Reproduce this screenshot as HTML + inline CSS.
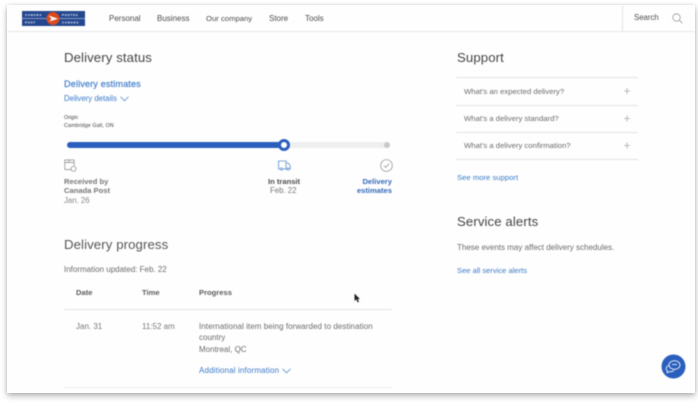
<!DOCTYPE html>
<html lang="en">
<head>
<meta charset="utf-8">
<title>Delivery status</title>
<style>
html,body{margin:0;padding:0;background:#fff;width:698px;height:408px;overflow:hidden}
body{font-family:"Liberation Sans",sans-serif;position:relative}
#card{position:absolute;left:7px;top:5px;width:688px;height:388px;background:#fefefe;box-shadow:0 3px 6px rgba(0,0,0,.28),0 0 3px rgba(0,0,0,.12)}
#page{position:absolute;left:0;top:0;width:698px;height:408px;filter:blur(.4px)}
.t{position:absolute;white-space:nowrap;line-height:1;color:#555}
.h{color:#444;font-size:13.2px;letter-spacing:.1px}
.nav{font-size:8px;color:#4c4c4c;top:14.500px}
.b{color:#3b7bc9}
.s{font-size:7.8px}
.l{position:absolute;height:1px;background:#e2e2e2}
svg{position:absolute;overflow:visible}
</style>
</head>
<body>
<div id="card"></div>
<div id="page">
<div class="l" style="left:7px;top:31px;width:688px;background:#e8e8e8"></div>
<div class="l" style="left:622px;top:6px;width:1px;height:25px;background:#e2e2e2"></div>

<svg style="left:22px;top:11px" width="63" height="15" viewBox="0 0 63 15">
<rect width="63" height="15" fill="#24478f"/>
<rect x="0" y="7.2" width="63" height=".6" fill="#c8d2e6"/>
<circle cx="31" cy="7.5" r="6.5" fill="#dd4b1c"/>
<path d="M26.5 4.5 L36 7.8 L27.5 10.5 L29.5 7.8Z" fill="#fff"/>
<text x="3" y="5.2" font-size="3" letter-spacing=".7" font-weight="700" fill="#fff" font-family="Liberation Sans">CANADA</text>
<text x="3" y="12.4" font-size="3" letter-spacing=".7" font-weight="700" fill="#fff" font-family="Liberation Sans">POST</text>
<text x="40" y="5.2" font-size="3" letter-spacing=".7" font-weight="700" fill="#fff" font-family="Liberation Sans">POSTES</text>
<text x="40" y="12.4" font-size="3" letter-spacing=".7" font-weight="700" fill="#fff" font-family="Liberation Sans">CANADA</text>
</svg>

<div class="t nav" style="left:109px">Personal</div>
<div class="t nav" style="left:157px">Business</div>
<div class="t nav" style="left:206px;font-size:7.7px">Our company</div>
<div class="t nav" style="left:269px">Store</div>
<div class="t nav" style="left:305px">Tools</div>
<div class="t nav" style="left:634px;top:13.500px;font-size:7.8px">Search</div>
<svg style="left:672px;top:13px" width="11" height="11" fill="none" stroke="#999" stroke-width=".8"><circle cx="4.5" cy="4.5" r="3.7"/><path d="M7.2 7.2L10.4 10.2"/></svg>

<div class="t h" style="left:64px;top:51px">Delivery status</div>
<div class="t b" style="left:64px;top:80px;font-size:9.2px;letter-spacing:.1px;font-weight:400;-webkit-text-stroke:.15px #3b7bc9">Delivery estimates</div>
<div class="t b s" style="left:64px;top:95px">Delivery details</div>
<svg style="left:120px;top:96px" width="9" height="6" fill="none" stroke="#5c8fd0" stroke-width=".8"><path d="M.5 .8L4.5 4.8L8.5 .8"/></svg>
<div class="t" style="left:64px;top:116px;font-size:5.3px;color:#444">Origin</div>
<div class="t" style="left:64px;top:123.500px;font-size:5.3px;color:#444;letter-spacing:.1px">Cambridge Galt, ON</div>

<div style="position:absolute;left:280px;top:142px;width:110px;height:6px;border-radius:3px;background:#efefef"></div>
<div style="position:absolute;left:67px;top:142px;width:217px;height:6px;border-radius:3px;background:#2a5fbd"></div>
<div style="position:absolute;left:278px;top:139px;width:6px;height:6px;border:3px solid #2a5fbd;border-radius:50%;background:#fff"></div>
<div style="position:absolute;left:384px;top:142px;width:6px;height:6px;border-radius:50%;background:#c9c9c9"></div>

<svg style="left:64px;top:159px" width="13" height="13" fill="none" stroke="#888" stroke-width=".7"><path d="M7 10.5H.8V1h9.4v6"/><path d="M.8 3.5h9.4M5 1v2.5"/><circle cx="9.5" cy="9.8" r="2.5"/></svg>
<svg style="left:278px;top:160px" width="13" height="11" fill="none" stroke="#5c8fd0" stroke-width=".8"><path d="M2.5 9H.6V1h7.4v8H4.5M8 3h2.2l2 2.6V9h-1M9 9H8"/><circle cx="3.5" cy="9" r="1.1"/><circle cx="10" cy="9" r="1.1"/></svg>
<svg style="left:380px;top:159px" width="13" height="13" fill="none" stroke="#888" stroke-width=".7"><circle cx="6.5" cy="6.5" r="5.8"/><path d="M4 6.8L5.8 8.4L9 4.6"/></svg>

<div class="t s" style="left:64px;top:177.500px;font-weight:700;color:#777;font-size:7.6px">Received by</div>
<div class="t s" style="left:64px;top:187px;font-weight:700;color:#777;font-size:7.6px">Canada Post</div>
<div class="t s" style="left:64px;top:196.500px;color:#888">Jan. 26</div>
<div class="t s" style="left:268px;top:177.500px;font-weight:700;color:#4c4c4c;font-size:7.6px">In transit</div>
<div class="t s" style="left:270px;top:187px;color:#777">Feb. 22</div>
<div class="t s" style="left:352px;top:177.500px;width:40px;text-align:right;font-weight:700;color:#3368b8;font-size:7.6px">Delivery</div>
<div class="t s" style="left:352px;top:187px;width:40px;text-align:right;font-weight:700;color:#3368b8;font-size:7.6px">estimates</div>

<div class="t h" style="left:64px;top:238px;color:#555">Delivery progress</div>
<div class="t s" style="left:64px;top:265.500px;color:#6c6c6c;font-size:8px">Information updated: Feb. 22</div>
<div class="t s" style="left:76px;top:288.500px;font-weight:700;color:#5c5c5c;font-size:7.6px">Date</div>
<div class="t s" style="left:142px;top:288.500px;font-weight:700;color:#5c5c5c;font-size:7.6px">Time</div>
<div class="t s" style="left:199px;top:288.500px;font-weight:700;color:#5c5c5c;font-size:7.6px">Progress</div>
<div class="l" style="left:64px;top:309px;width:328px"></div>
<div class="t s" style="left:76px;top:322.500px;color:#777;font-size:8px">Jan. 31</div>
<div class="t s" style="left:142px;top:322.500px;color:#777;font-size:8px">11:52 am</div>
<div class="t s" style="left:199px;top:322.500px;color:#6c6c6c;font-size:8px;letter-spacing:.06px">International item being forwarded to destination</div>
<div class="t s" style="left:199px;top:334px;color:#6c6c6c;font-size:8px">country</div>
<div class="t s" style="left:199px;top:345.500px;color:#6c6c6c;font-size:8px">Montreal, QC</div>
<div class="t b s" style="left:199px;top:366.500px;font-size:8px;letter-spacing:.15px">Additional information</div>
<svg style="left:282px;top:368px" width="9" height="6" fill="none" stroke="#5c8fd0" stroke-width=".8"><path d="M.5 .8L4.5 4.8L8.5 .8"/></svg>
<div class="l" style="left:64px;top:387px;width:328px;background:#eee"></div>

<svg style="left:354px;top:293px" width="7" height="10"><path d="M.5 .5V8L2.3 6.4L3.6 9.4L5 8.8L3.8 6H6Z" fill="#222"/></svg>

<div class="t h" style="left:457px;top:51px">Support</div>
<div class="l" style="left:456px;top:77px;width:182px"></div>
<div class="t s" style="left:464px;top:87.500px;color:#6c6c6c;font-size:7.7px">What's an expected delivery?</div>
<div class="l" style="left:456px;top:105px;width:182px"></div>
<div class="t s" style="left:464px;top:114.500px;color:#6c6c6c;font-size:7.7px">What's a delivery standard?</div>
<div class="l" style="left:456px;top:132px;width:182px"></div>
<div class="t s" style="left:464px;top:141.500px;color:#6c6c6c;font-size:7.7px">What's a delivery confirmation?</div>
<div class="l" style="left:456px;top:159px;width:182px"></div>
<svg style="left:624px;top:88px" width="7" height="61" stroke="#aaa" stroke-width=".8"><path d="M0 3h6M3 0v6M0 30.500h6M3 27.500v6M0 57.500h6M3 54.500v6"/></svg>
<div class="t b s" style="left:457px;top:173.500px;font-size:7.7px">See more support</div>

<div class="t h" style="left:457px;top:215px">Service alerts</div>
<div class="t s" style="left:457px;top:243.500px;color:#6c6c6c;font-size:8px">These events may affect delivery schedules.</div>
<div class="t b s" style="left:457px;top:266.500px;font-size:7.6px">See all service alerts</div>

<svg style="left:661px;top:354px" width="25" height="25">
<circle cx="12.500" cy="12.500" r="12" fill="#2a5fbd"/>
<ellipse cx="13.500" cy="11" rx="5.500" ry="4.300" fill="none" stroke="#fff" stroke-width=".8"/>
<path d="M7.500 11.500c-1.500.8-2.300 2-2.300 3.300 0 1 .5 1.800 1.300 2.300l-.4 1.600 2.300-1.100c1.800.3 3.500-.1 4.600-1.400" fill="none" stroke="#fff" stroke-width=".8"/>
<path d="M11 10.500h5" stroke="#fff" stroke-width=".8"/>
</svg>
</div>
</body>
</html>
